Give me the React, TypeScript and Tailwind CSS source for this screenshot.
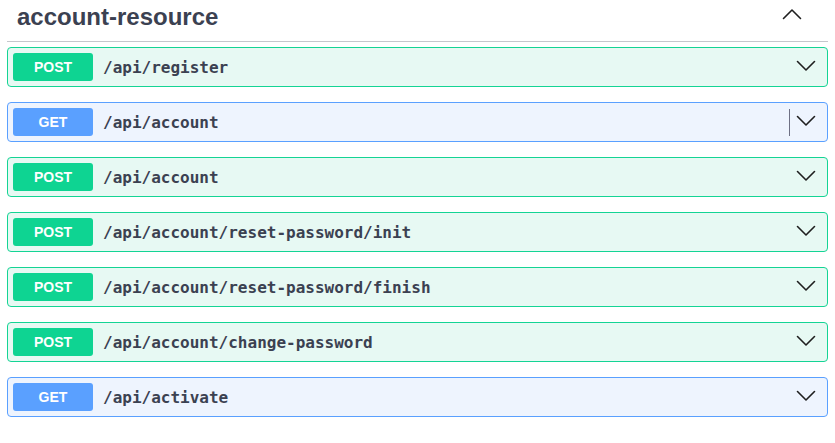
import { ReactNode } from 'react';

type Method = 'GET' | 'POST';

interface Endpoint {
    method: Method;
    path: string;
    divider?: boolean;
}

const endpoints: Endpoint[] = [
    { method: 'POST', path: '/api/register' },
    { method: 'GET', path: '/api/account', divider: true },
    { method: 'POST', path: '/api/account' },
    { method: 'POST', path: '/api/account/reset-password/init' },
    { method: 'POST', path: '/api/account/reset-password/finish' },
    { method: 'POST', path: '/api/account/change-password' },
    { method: 'GET', path: '/api/activate' },
];

function Chevron({ up = false }: { up?: boolean }) {
    return (
        <svg width="20" height="12" viewBox="0 0 20 12" className="shrink-0">
            <polyline
                points={up ? '1.5,10.5 10,2 18.5,10.5' : '1.5,1.5 10,10 18.5,1.5'}
                fill="none"
                stroke="#1f1f1f"
                strokeWidth="1.6"
                strokeLinecap="round"
                strokeLinejoin="round"
            />
        </svg>
    );
}

function OpBlock({ method, path, divider }: Endpoint) {
    const isGet = method === 'GET';
    const row = isGet
        ? 'border-[#5aa0ff] bg-[#eef4fe]'
        : 'border-[#14d494] bg-[#e7f9f3]';
    const badge = isGet ? 'bg-[#5aa0ff]' : 'bg-[#0ed492]';

    return (
        <div className={`flex items-center h-10 mb-[15px] rounded-[4px] border p-[5px] ${row}`}>
            <span
                className={`w-20 h-7 rounded-[3px] flex items-center justify-center text-white text-[14px] font-bold ${badge}`}
                style={{ fontFamily: '"Liberation Sans", Arial, sans-serif' }}
            >
                {method}
            </span>
            <span
                className="flex-1 px-[10px] pt-[2px] text-[16px] font-bold text-[#3b4151]"
                style={{ fontFamily: '"DejaVu Sans Mono", monospace' }}
            >
                {path}
            </span>
            {divider && <span className="w-px h-[27px] bg-[#6e7084] mr-[6px]" />}
            <span className="mr-[6px] mb-[3px] flex items-center">
                <Chevron />
            </span>
        </div>
    );
}

function Section({ title, children }: { title: string; children: ReactNode }) {
    return (
        <div className="px-[7px]">
            <div className="flex items-start h-[42px] border-b border-[#c5c7cc] mb-[5px]">
                <h3
                    className="flex-1 pt-[3px] pl-[10px] text-[24px] leading-[27px] font-bold text-[#3b4151]"
                    style={{ fontFamily: '"Liberation Sans", Arial, sans-serif' }}
                >
                    {title}
                </h3>
                <span className="mt-[8px] mr-[26px]">
                    <Chevron up />
                </span>
            </div>
            {children}
        </div>
    );
}

export default function App() {
    return (
        <div className="w-[835px] h-[443px] bg-white overflow-hidden">
            <Section title="account-resource">
                {endpoints.map((ep) => (
                    <OpBlock key={ep.method + ep.path} {...ep} />
                ))}
            </Section>
        </div>
    );
}
